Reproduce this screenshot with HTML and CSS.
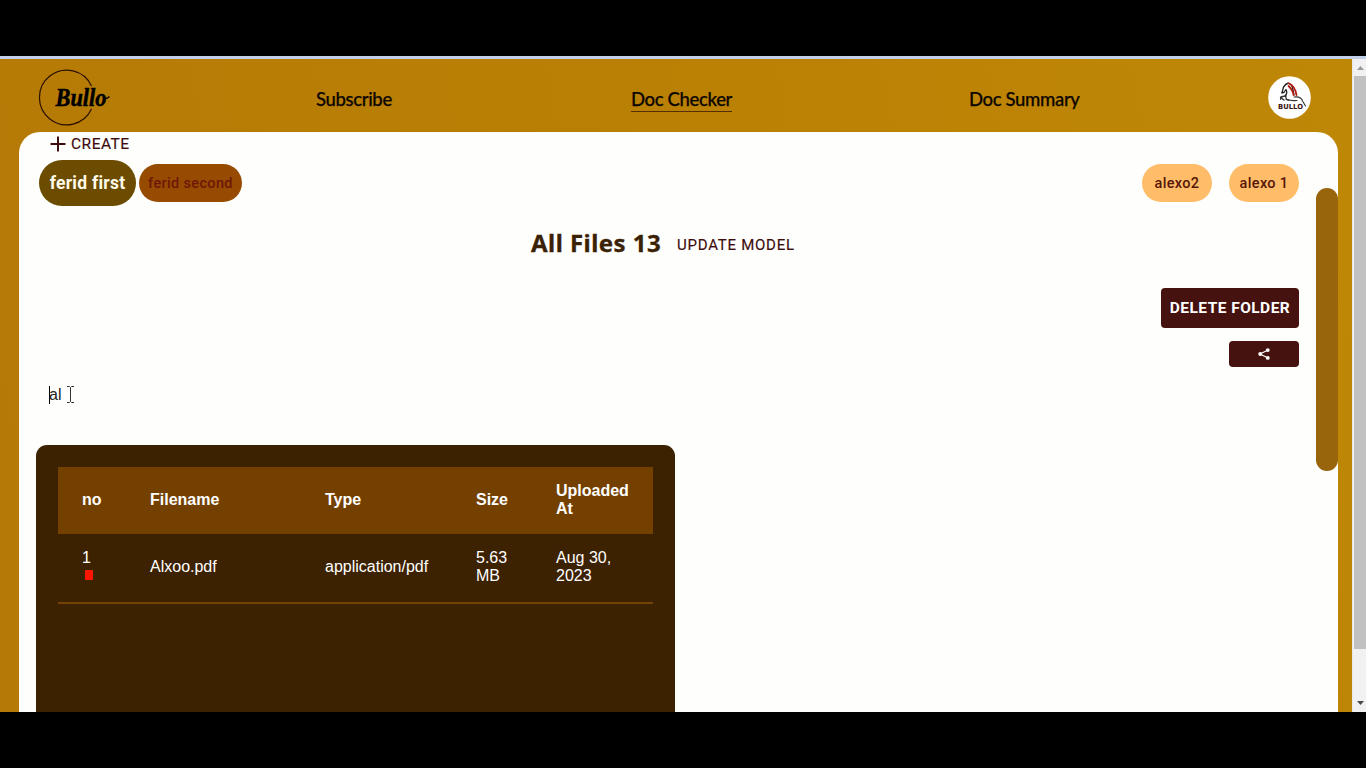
FILE: index.html
```html
<!DOCTYPE html>
<html lang="en">
<head>
<meta charset="utf-8">
<title>Bullo</title>
<link rel="stylesheet" href="styles.css">
</head>
<body>
<div class="window">
  <div class="page">
    <header class="header">
      <svg class="logo" width="73" height="58" viewBox="0 0 73 58">
        <path d="M53.500 17A27.300 27.300 0 1 0 53.500 40" fill="none" stroke="#2c1000" stroke-width="1.2"/>
        <text class="logo-text" x="17.500" y="36.500" textLength="51" lengthAdjust="spacingAndGlyphs">Bullo</text>
        <path d="M66 29.500Q69 30 71.500 27.500" fill="none" stroke="#000" stroke-width="1.2"/>
      </svg>
      <nav class="nav">
        <a class="nav-link">Subscribe</a>
        <a class="nav-link active">Doc Checker</a>
        <a class="nav-link">Doc Summary</a>
      </nav>
      <svg class="avatar" width="43" height="43" viewBox="0 0 43 43">
        <circle cx="21.5" cy="21.5" r="21.3" fill="#fff"/>
        <g fill="none" stroke-linecap="round" stroke-linejoin="round">
          <path d="M14 17L15.500 11Q18 7.500 20.500 7Q24 8 25 14L26 19" stroke="#222" stroke-width="1.3"/>
          <path d="M14 16.500L16 16.500L18 13.500Q20 17 17 20L12.500 21.500L16 24M18 19Q17 24 21 24" stroke="#222" stroke-width="1.3"/>
          <path d="M21 7.500Q27 10 28.500 19M20.500 10Q25 14 25.500 19" stroke="#b31b14" stroke-width="1.8"/>
          <path d="M17 20L13 20.500L12.500 23.500M18 23.500Q23 25 29 24.500M26 21Q33 20 34.500 25L37.500 30" stroke="#333" stroke-width="1.1"/>
        </g>
        <text class="avatar-text" x="10" y="32.500" textLength="25" lengthAdjust="spacingAndGlyphs">BULLO</text>
      </svg>
    </header>
    <main class="panel">
      <div class="content">
        <button class="create">
          <svg width="16" height="16" viewBox="0 0 16 16"><path d="M8 0.500V15.500M0.500 8H15.500" stroke="#3d0c0c" stroke-width="2"/></svg>
          <span>CREATE</span>
        </button>
        <div class="folders">
          <button class="chip selected">ferid first</button>
          <button class="chip second">ferid second</button>
          <button class="chip shared push">alexo2</button>
          <button class="chip shared">alexo 1</button>
        </div>
        <div class="heading">
          <h1 class="title">All Files 13</h1>
          <button class="update">UPDATE MODEL</button>
        </div>
        <div class="actions">
          <button class="delete">DELETE FOLDER</button>
          <button class="share">
            <svg width="12" height="12" viewBox="0 0 12 12"><path d="M10 2L2 6L10 10" fill="none" stroke="#fff" stroke-width="1.2"/><circle cx="9.800" cy="2.100" r="1.900" fill="#fff"/><circle cx="2.200" cy="6" r="1.900" fill="#fff"/><circle cx="9.800" cy="9.900" r="1.900" fill="#fff"/></svg>
          </button>
        </div>
        <div class="search">
          <i class="caret"></i><span>al</span>
          <svg class="pointer" width="9" height="17" viewBox="0 0 9 17"><path d="M1 .5H3.500L4.500 1.500L5.500 .5H8M4.500 1.500V15.500M1 16.500H3.500L4.500 15.500L5.500 16.500H8" fill="none" stroke="#333" stroke-width="1"/></svg>
        </div>
        <section class="files">
          <table class="table">
            <colgroup><col class="c-no"><col class="c-name"><col class="c-type"><col class="c-size"><col class="c-date"></colgroup>
            <thead><tr><th>no</th><th>Filename</th><th>Type</th><th>Size</th><th>Uploaded At</th></tr></thead>
            <tbody><tr><td>1<i class="mark"></i></td><td>Alxoo.pdf</td><td>application/pdf</td><td>5.63 MB</td><td>Aug 30, 2023</td></tr></tbody>
          </table>
        </section>
      </div>
      <div class="track"><div class="thumb"></div></div>
    </main>
  </div>
  <div class="scrollbar">
    <svg width="14" height="17" viewBox="0 0 14 17"><path d="M4 11L7.500 7L11 11Z" fill="#999"/></svg>
    <div class="scroll-thumb"></div>
    <svg class="down" width="14" height="17" viewBox="0 0 14 17"><path d="M4 6L7.500 10L11 6Z" fill="#484848"/></svg>
  </div>
</div>
</body>
</html>
```

FILE: styles.css
```css
* { box-sizing: border-box; }
body { margin: 0; padding: 56px 0; height: 768px; background: #000; overflow: hidden; font-family: "Liberation Sans", Arial, sans-serif; }
button { border: 0; margin: 0; padding: 0; background: none; font-family: Roboto, sans-serif; white-space: nowrap; }
.window { height: 656px; display: flex; border-top: 3px solid #c2cfe9; overflow: hidden; }
.page { width: 1352px; height: 653px; display: flex; flex-direction: column; background: linear-gradient(80deg, #b57a06, #ba8005 50%, #bf8706); }
.header { height: 73px; flex: none; display: flex; align-items: flex-start; padding-left: 38px; }
.logo { margin-top: 10px; flex: none; }
.logo-text { font: italic bold 25px "Liberation Serif", serif; fill: #000; stroke: #000; stroke-width: .5px; }
.nav { width: 1157px; display: grid; grid-template-columns: 315px 338px 1fr; padding: 29px 0 0 205px; }
.nav-link { justify-self: start; font: 500 18.5px/22px Lato, sans-serif; letter-spacing: -.35px; color: #0d0700; height: 24px; white-space: nowrap; -webkit-text-stroke: .25px #0d0700; }
.nav-link.active { border-bottom: 1px solid #542f05; }
.avatar { margin-top: 17px; flex: none; }
.avatar-text { font: bold 7px "DejaVu Sans", sans-serif; fill: #3d1010; }
.panel { flex: 1; min-height: 0; margin: 0 14px 0 19px; background: #fefefd; border-radius: 21px 21px 0 0; display: flex; overflow: hidden; }
.content { width: 1297px; display: flex; flex-direction: column; padding: 0 17px; }
.content > * { flex: none; }
.create { height: 24px; align-self: flex-start; margin-left: 14px; display: flex; align-items: center; gap: 5px; font-size: 15.5px; letter-spacing: .5px; color: #3d0c0c; -webkit-text-stroke: .15px #3d0c0c; }
.folders { height: 54px; display: flex; align-items: center; padding-left: 3px; }
.chip { height: 38px; border-radius: 19px; font-size: 14.5px; font-weight: 500; letter-spacing: .35px; }
.chip.selected { width: 97px; height: 46px; border-radius: 23px; background: #6b4c00; color: #fffbe8; font-size: 17.5px; font-weight: 700; letter-spacing: .25px; }
.chip.second { width: 103px; margin-left: 3px; background: #964b00; color: #6d1808; }
.chip.shared { width: 70px; margin-left: 17px; background: #ffbd69; color: #571608; }
.chip.push { margin-left: auto; }
.heading { height: 54px; margin-top: 6px; display: flex; align-items: center; padding-left: 495px; gap: 17px; }
.title { margin: 0; width: 129px; font: 700 24px/32px "Noto Sans", sans-serif; letter-spacing: .45px; color: #3b2104; white-space: nowrap; -webkit-text-stroke: .3px #3b2104; }
.update { font-size: 15px; letter-spacing: .75px; color: #3d0c0c; margin-top: 4px; -webkit-text-stroke: .15px #3d0c0c; }
.actions { margin-top: 18px; display: flex; flex-direction: column; align-items: flex-end; gap: 13px; }
.delete { width: 138px; height: 40px; border-radius: 4px; background: #45120f; color: #fff; font-size: 15.5px; font-weight: 700; letter-spacing: .45px; }
.share { width: 70px; height: 26px; border-radius: 4px; background: #45120f; display: flex; justify-content: center; align-items: center; }
.search { height: 36px; margin-top: 10px; padding-left: 13px; display: flex; align-items: center; font-size: 16px; color: #222; }
.caret { width: 1px; height: 18px; margin-right: -1px; background: #000; }
.pointer { margin-left: 5px; margin-top: -2px; }
.files { width: 639px; height: 400px; margin-top: 32px; padding: 22px; border-radius: 11px; background: #3d2202; }
.table { width: 595px; table-layout: fixed; border-collapse: collapse; font-size: 16px; line-height: 18px; color: #fff; }
.table th { height: 67px; text-align: left; background: #744000; }
.table td { height: 69px; border-bottom: 2px solid #744204; }
.table th, .table td { padding: 0 20px 2px 24px; }
.c-no { width: 68px; } .c-name { width: 175px; } .c-type { width: 151px; } .c-size { width: 80px; } .c-date { width: 121px; }
.mark { display: block; width: 8px; height: 10px; margin: 3px 0 5px 3px; border-radius: 1px; background: #ff1600; }
.track { width: 22px; padding-top: 56px; }
.thumb { height: 283px; border-radius: 11px; background: #99650c; }
.scrollbar { width: 14px; display: flex; flex-direction: column; background: #f1f1f1; border-left: 1px solid #e8e8ee; }
.scroll-thumb { height: 573px; margin-left: 1px; background: #c1c1c1; }
.down { margin-top: auto; }
```
